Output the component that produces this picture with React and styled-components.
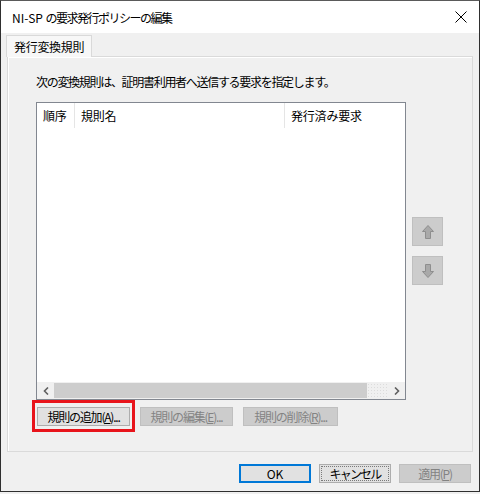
import React from 'react'
import styled, { createGlobalStyle } from 'styled-components'

const GlobalStyle = createGlobalStyle`
  html, body {
    margin: 0;
    padding: 0;
    background: #f0f0f0;
  }
  * {
    box-sizing: border-box;
  }
`

const Window = styled.div`
  width: 480px;
  height: 492px;
  border: 1px solid #2f2f2f;
  border-top-color: #5a5a5a;
  background: #f0f0f0;
  display: flex;
  flex-direction: column;
  font-family: 'Noto Sans CJK JP', 'Noto Sans', sans-serif;
  font-size: 12px;
  color: #000;
`

const TitleBar = styled.div`
  height: 32px;
  background: #fff;
  display: flex;
  align-items: center;
  justify-content: space-between;
  padding: 0 10px 0 11px;
`

const Title = styled.span`
  font-size: 12px;
  letter-spacing: -1.5px;
`

const Latin = styled.span`
  letter-spacing: 0;
`

const CloseButton = styled.div`
  width: 14px;
  height: 14px;
  display: flex;
  align-items: center;
  justify-content: center;
  margin-right: 1px;
`

const Body = styled.div`
  flex: 1;
  display: flex;
  flex-direction: column;
  padding-top: 2px;
`

const TabStrip = styled.div`
  display: flex;
  padding-left: 5px;
  position: relative;
  z-index: 1;
  margin-bottom: -1px;
`

const Tab = styled.div`
  height: 22px;
  padding: 0 7px;
  display: flex;
  align-items: center;
  background: #f7f7f7;
  border: 1px solid #d9d9d9;
  border-bottom: none;
  font-size: 12px;
  letter-spacing: -0.3px;
`

const Panel = styled.div`
  margin: 0 6px;
  height: 396px;
  border: 1px solid #dadada;
  box-shadow: inset 1px 1px 0 #fff;
  background: #f0f0f0;
  padding: 17px 0 0 28px;
  display: flex;
  flex-direction: column;
`

const Instruction = styled.div`
  line-height: 16px;
  height: 16px;
  letter-spacing: -1.3px;
`

const ListRow = styled.div`
  display: flex;
  margin-top: 12px;
`

const ListBox = styled.div`
  width: 370px;
  height: 298px;
  border: 1px solid #828790;
  background: #fff;
  display: flex;
  flex-direction: column;
`

const Header = styled.div`
  display: flex;
  height: 25px;
`

const HeaderCell = styled.div`
  width: ${(p) => p.$width}px;
  flex: ${(p) => (p.$grow ? 1 : 'none')};
  display: flex;
  align-items: center;
  padding-left: ${(p) => p.$pad || 6}px;
  border-right: ${(p) => (p.$last ? 'none' : '1px solid #e5e5e5')};
  font-size: 12px;
  letter-spacing: -0.2px;
`

const ListArea = styled.div`
  flex: 1;
`

const HScroll = styled.div`
  height: 17px;
  display: flex;
  align-items: center;
  background: #f0f0f0;
`

const ScrollArrow = styled.div`
  width: 17px;
  height: 17px;
  display: flex;
  align-items: center;
  justify-content: center;
`

const Thumb = styled.div`
  width: 313px;
  height: 15px;
  background: #cdcdcd;
`

const Track = styled.div`
  flex: 1;
  height: 15px;
  background-image: radial-gradient(#dcdcdc 0.6px, transparent 0.8px);
  background-size: 3px 3px;
`

const ArrowColumn = styled.div`
  display: flex;
  flex-direction: column;
  gap: 10px;
  margin-left: 6px;
  padding-top: 115px;
`

const ArrowButton = styled.div`
  width: 31px;
  height: 29px;
  background: #cccccc;
  border: 1px solid #bfbfbf;
  display: flex;
  align-items: center;
  justify-content: center;
`

const ActionRow = styled.div`
  display: flex;
  gap: 10px;
  margin-top: 7px;
  padding-left: 1px;
`

const Highlight = styled.div`
  position: relative;
  display: flex;

  &::after {
    content: '';
    position: absolute;
    top: -7px;
    bottom: -6px;
    left: -5px;
    right: -5px;
    border: 3px solid #e8141b;
    pointer-events: none;
  }
`

const Button = styled.div`
  width: ${(p) => p.$width || 93}px;
  height: 19px;
  display: flex;
  align-items: center;
  justify-content: center;
  background: ${(p) => (p.$disabled ? '#cccccc' : '#e1e1e1')};
  border: ${(p) =>
    p.$default
      ? '2px solid #0078d7'
      : p.$disabled
        ? '1px solid #bfbfbf'
        : '1px solid #adadad'};
  color: ${(p) => (p.$disabled ? '#838383' : '#000')};
  font-size: 12px;
  letter-spacing: ${(p) => p.$spacing ?? -1.2}px;
  white-space: nowrap;
  outline: ${(p) => (p.$focus ? '1px dotted #7a7a7a' : 'none')};
  outline-offset: -3px;
`

const Footer = styled.div`
  display: flex;
  justify-content: flex-end;
  gap: 8px;
  padding: 12px 8px 0 0;
`

const ArrowIcon = ({ down }) => (
  <svg
    width="14"
    height="16"
    viewBox="0 0 14 16"
    style={down ? { transform: 'rotate(180deg)' } : undefined}
  >
    <path
      d="M7 1.5 L12.5 7.5 L9.5 7.5 L9.5 14.5 L4.5 14.5 L4.5 7.5 L1.5 7.5 Z"
      fill="#a9a9a9"
      stroke="#8e8e8e"
      strokeWidth="1"
      strokeLinejoin="round"
    />
  </svg>
)

const App = () => {
  return (
    <>
      <GlobalStyle />
      <Window>
        <TitleBar>
          <Title>
            <Latin>NI-SP </Latin>の要求発行ポリシーの編集
          </Title>
          <CloseButton>
            <svg width="12" height="12" viewBox="0 0 12 12">
              <path d="M0.5 0.5 L11.5 11.5 M11.5 0.5 L0.5 11.5" stroke="#000" strokeWidth="1" />
            </svg>
          </CloseButton>
        </TitleBar>
        <Body>
          <TabStrip>
            <Tab>発行変換規則</Tab>
          </TabStrip>
          <Panel>
            <Instruction>次の変換規則は、証明書利用者へ送信する要求を指定します。</Instruction>
            <ListRow>
              <ListBox>
                <Header>
                  <HeaderCell $width={38}>順序</HeaderCell>
                  <HeaderCell $width={210}>規則名</HeaderCell>
                  <HeaderCell $grow $last>
                    発行済み要求
                  </HeaderCell>
                </Header>
                <ListArea />
                <HScroll>
                  <ScrollArrow>
                    <svg width="6" height="8" viewBox="0 0 6 8">
                      <path d="M5 0.5 L1.5 4 L5 7.5" fill="none" stroke="#606060" strokeWidth="1.6" />
                    </svg>
                  </ScrollArrow>
                  <Thumb />
                  <Track />
                  <ScrollArrow>
                    <svg width="6" height="8" viewBox="0 0 6 8">
                      <path d="M1 0.5 L4.5 4 L1 7.5" fill="none" stroke="#606060" strokeWidth="1.6" />
                    </svg>
                  </ScrollArrow>
                </HScroll>
              </ListBox>
              <ArrowColumn>
                <ArrowButton>
                  <ArrowIcon />
                </ArrowButton>
                <ArrowButton>
                  <ArrowIcon down />
                </ArrowButton>
              </ArrowColumn>
            </ListRow>
            <ActionRow>
              <Highlight>
                <Button>
                  規則の追加(<u>A</u>)...
                </Button>
              </Highlight>
              <Button $disabled>
                規則の編集(<u>E</u>)...
              </Button>
              <Button $disabled $width={95}>
                規則の削除(<u>R</u>)...
              </Button>
            </ActionRow>
          </Panel>
          <Footer>
            <Button $default $width={72} $spacing={0}>
              OK
            </Button>
            <Button $focus $width={72} $spacing={-1.8}>
              キャンセル
            </Button>
            <Button $disabled $width={72}>
              適用(<u>P</u>)
            </Button>
          </Footer>
        </Body>
      </Window>
    </>
  )
}

export default App
